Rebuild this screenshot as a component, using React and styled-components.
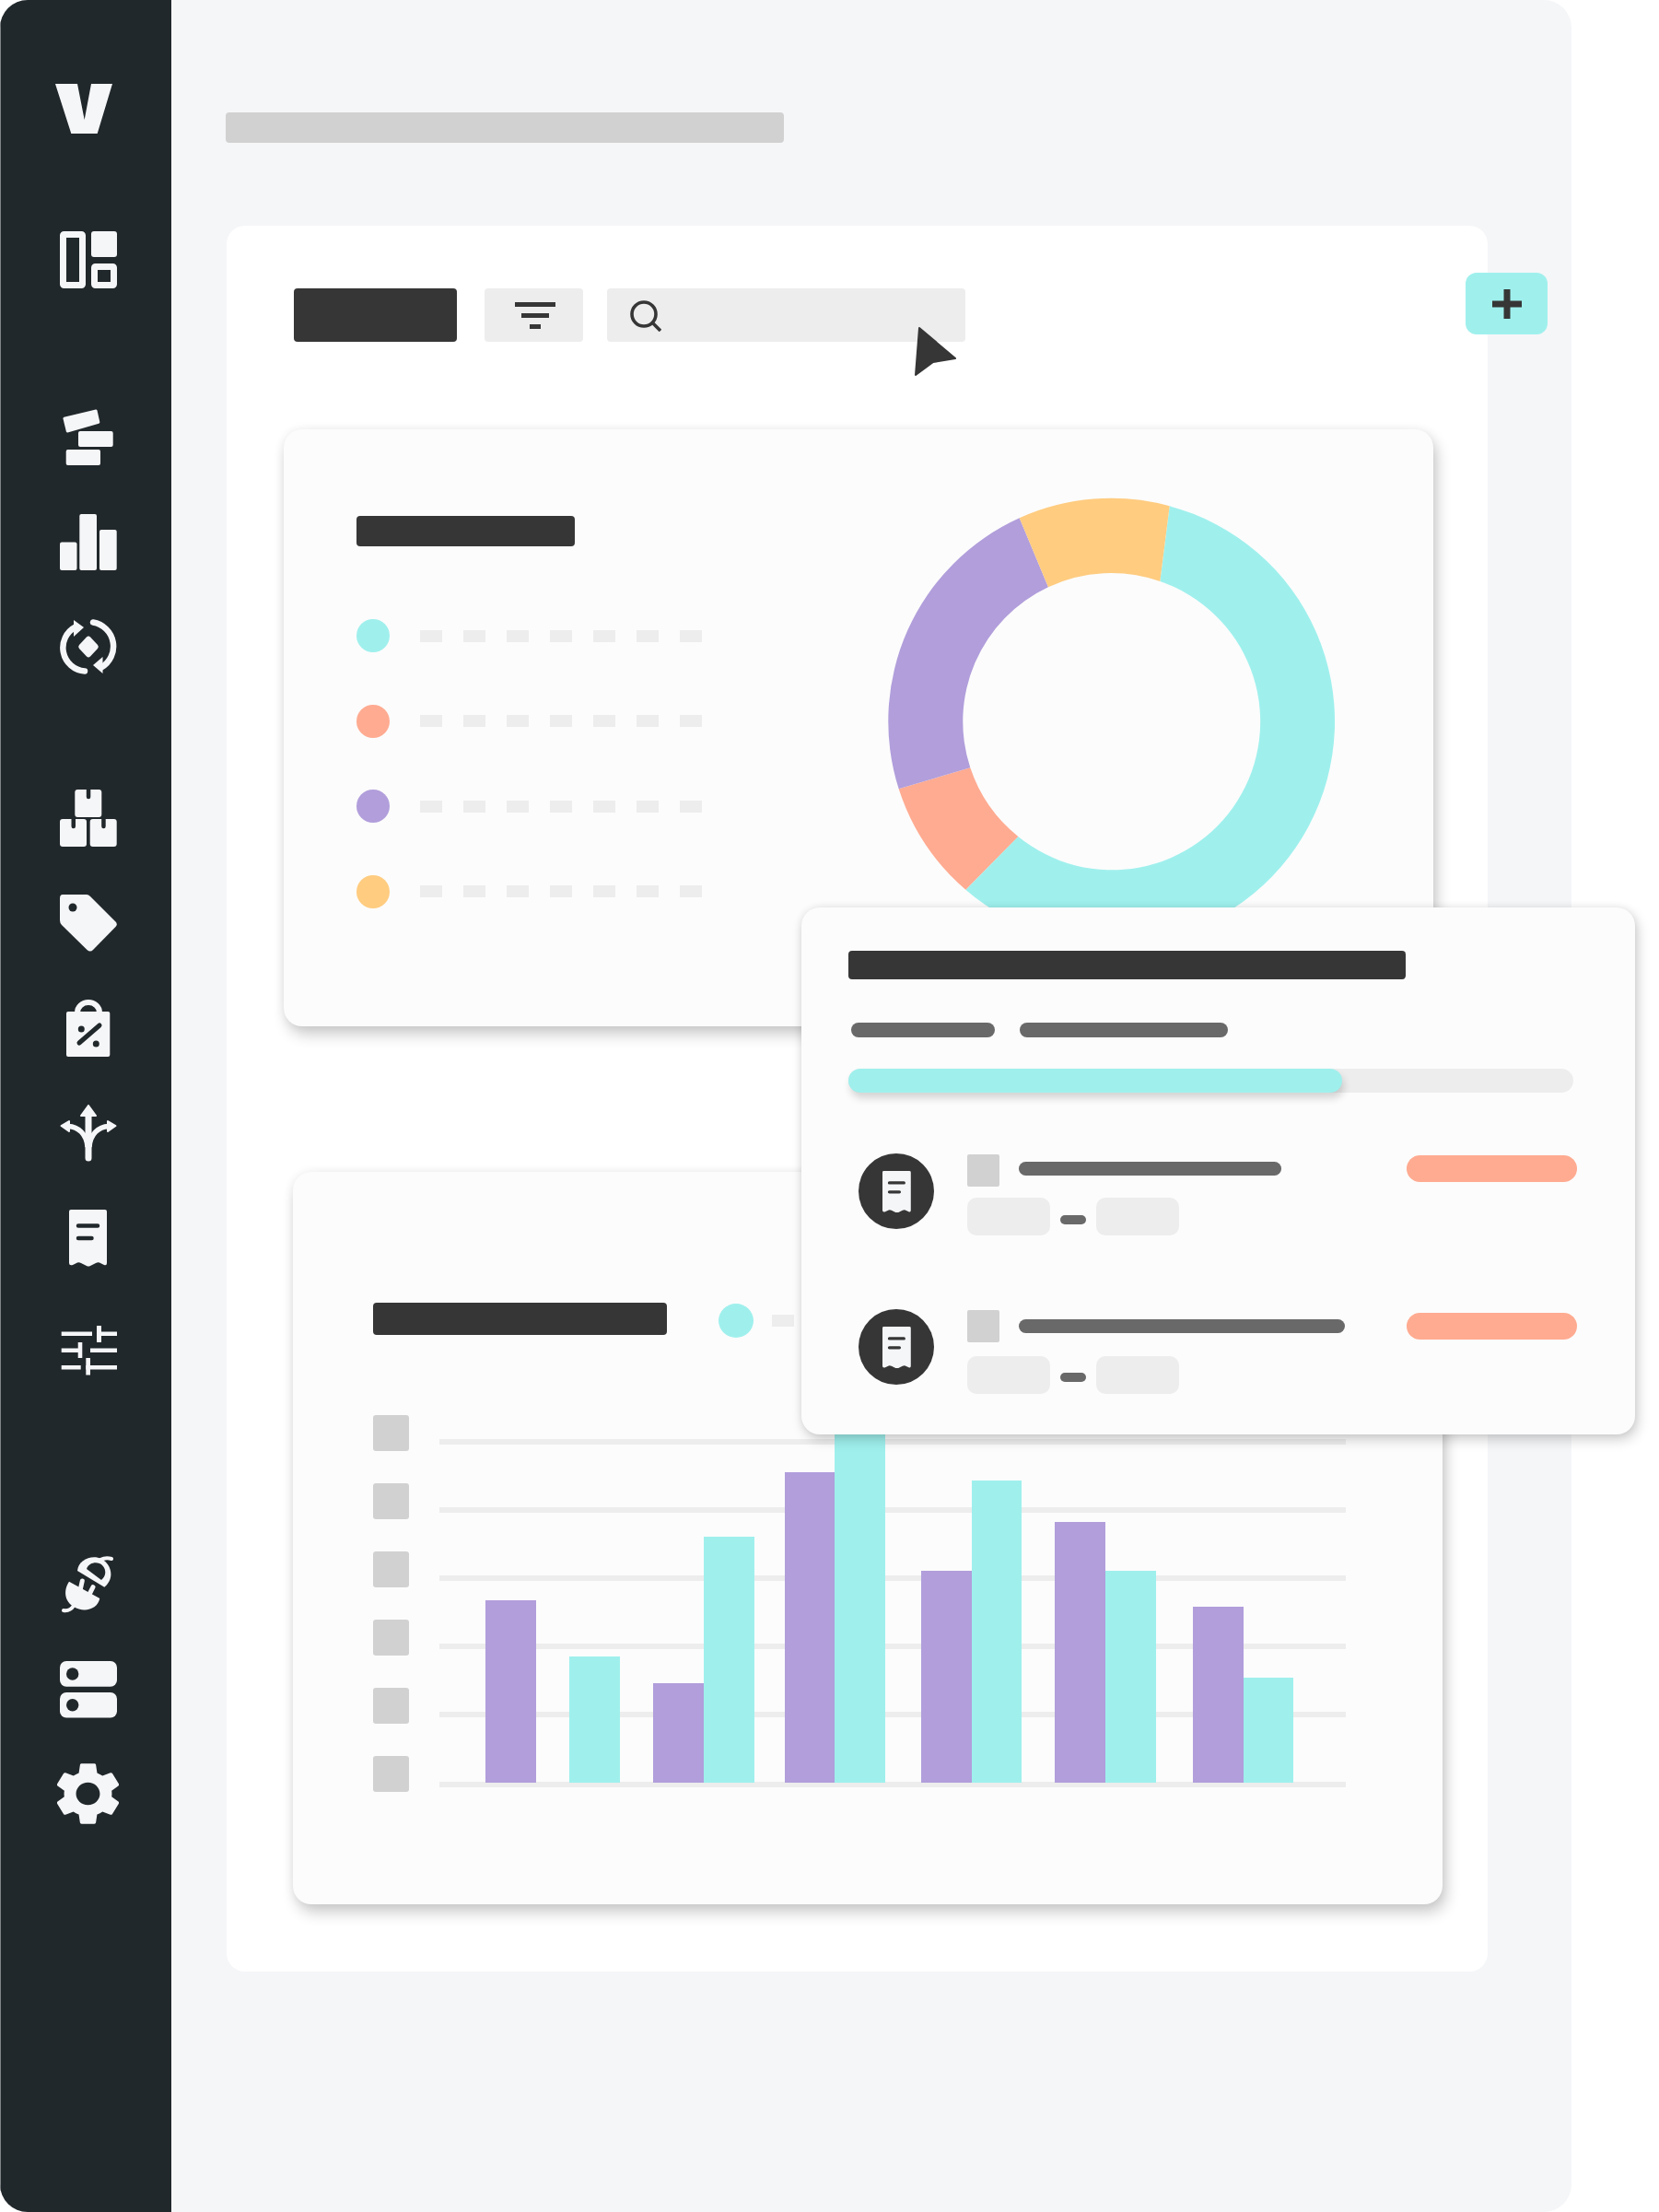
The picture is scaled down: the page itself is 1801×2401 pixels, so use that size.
import styled, { createGlobalStyle } from "styled-components";

const INK = "#21282b";
const DARK = "#363636";
const TEAL = "#9ff0ed";
const PINK = "#ffab91";
const PURPLE = "#b19edb";
const YELLOW = "#ffcc80";
const SOFT = "#ededed";
const MID = "#d1d1d1";
const GREY = "#696969";
const PALE = "#f5f6f8";
const CARD = "#fcfcfc";

const GlobalStyle = createGlobalStyle`
    html, body {
        margin: 0;
        padding: 0;
        background: #ffffff;
        font-family: "Liberation Sans", Arial, sans-serif;
    }
`;

const Page = styled.div`
    position: relative;
    width: 1801px;
    height: 2401px;
    overflow: hidden;
    background: #ffffff;
`;

const Frame = styled.div`
    display: flex;
    width: 1706px;
    height: 2401px;
    border-radius: 30px;
    overflow: hidden;
    background: ${PALE};
`;

const Sidebar = styled.nav`
    display: flex;
    flex-direction: column;
    align-items: center;
    flex: none;
    box-sizing: border-box;
    width: 186px;
    padding: 91px 0 0 6px;
    background: ${INK};
    box-shadow: inset 1px 0 0 #7f8486;
`;

const Logo = styled.svg`
    display: block;
    flex: none;
    width: 62px;
    height: 54px;
    margin-right: 10px;
    fill: ${PALE};
`;

const NavGroup = styled.div`
    display: flex;
    flex-direction: column;
    gap: 52px;
    width: 62px;
    margin-top: ${(p) => p.$top}px;
`;

const NavIcon = styled.svg`
    display: block;
    flex: none;
    width: 62px;
    height: 62px;
    fill: ${PALE};
    margin-top: ${(p) => p.$nudge || 0}px;
`;

const GearIcon = styled(NavIcon)`
    width: 67px;
    height: 68px;
    margin-left: -3px;
`;

const Main = styled.main`
    flex: 1;
    padding-top: 122px;
`;

const PageTitle = styled.div`
    width: 606px;
    height: 33px;
    margin-left: 59px;
    border-radius: 4px;
    background: ${MID};
`;

const Panel = styled.section`
    box-sizing: border-box;
    width: 1369px;
    height: 1895px;
    margin: 90px 0 0 60px;
    padding-top: 68px;
    border-radius: 20px;
    background: #ffffff;
`;

const Toolbar = styled.div`
    display: flex;
    margin-left: 73px;
    height: 58px;
`;

const PrimaryButton = styled.div`
    width: 177px;
    border-radius: 4px;
    background: ${DARK};
`;

const FilterButton = styled.div`
    display: flex;
    flex-direction: column;
    align-items: center;
    justify-content: center;
    gap: 7px;
    box-sizing: border-box;
    width: 107px;
    margin-left: 30px;
    padding-left: 3px;
    border-radius: 4px;
    background: ${SOFT};
`;

const FilterLine = styled.span`
    display: block;
    width: ${(p) => p.$w}px;
    height: 5px;
    background: ${DARK};
`;

const SearchBox = styled.div`
    display: flex;
    align-items: center;
    box-sizing: border-box;
    width: 389px;
    margin-left: 26px;
    padding-left: 25px;
    border-radius: 4px;
    background: ${SOFT};
`;

const SearchIcon = styled.svg`
    display: block;
    width: 34px;
    height: 34px;
    margin-top: 1px;
    fill: none;
    stroke: ${DARK};
    stroke-width: 3.6;
`;

const Card = styled.article`
    box-sizing: border-box;
    width: 1248px;
    margin: ${(p) => p.$top}px 0 0 ${(p) => p.$left}px;
    border-radius: 20px;
    background: ${CARD};
    box-shadow: 0 0 12px rgba(0, 0, 0, 0.06), 4px 9px 16px rgba(0, 0, 0, 0.2);
`;

const DonutCard = styled(Card)`
    display: flex;
    justify-content: space-between;
    align-items: flex-start;
    height: 648px;
    padding: 75px 108px 0 79px;
`;

const LegendColumn = styled.div`
    padding-top: 19px;
`;

const BlockTitle = styled.div`
    width: ${(p) => p.$w}px;
    height: ${(p) => p.$h}px;
    border-radius: 4px;
    background: ${DARK};
`;

const Legend = styled.div`
    display: flex;
    flex-direction: column;
    gap: 56.5px;
    margin-top: 79px;
`;

const LegendRow = styled.div`
    display: flex;
    align-items: center;
    gap: 33px;
`;

const Dot = styled.span`
    display: block;
    flex: none;
    width: 36px;
    height: 36px;
    border-radius: 50%;
    background: ${(p) => p.$color};
`;

const Dashes = styled.div`
    display: flex;
    gap: 23.5px;
`;

const Dash = styled.span`
    display: block;
    width: 23.5px;
    height: 13px;
    background: ${SOFT};
`;

const Donut = styled.svg`
    display: block;
    flex: none;
    width: 484px;
    height: 484px;
    overflow: visible;
`;

const ChartCard = styled(Card)`
    height: 795.5px;
    padding: 142.5px 0 0 87px;
`;

const ChartHeader = styled.div`
    display: flex;
    align-items: flex-start;
`;

const HeaderDot = styled(Dot)`
    width: 38px;
    height: 37px;
    margin: 1px 0 0 56px;
`;

const HeaderDash = styled(Dash)`
    margin: 13px 0 0 20px;
`;

const ChartBody = styled.div`
    display: flex;
    gap: 33px;
    margin-top: 84px;
`;

const YAxis = styled.div`
    display: flex;
    flex-direction: column;
    gap: 35px;
`;

const YTick = styled.span`
    display: block;
    width: 39px;
    height: 39px;
    border-radius: 3px;
    background: ${MID};
`;

const BarChart = styled.svg`
    display: block;
    flex: none;
    width: 984px;
    height: 410px;
`;

const AddButton = styled.div`
    position: absolute;
    left: 1591px;
    top: 296px;
    display: flex;
    align-items: center;
    justify-content: center;
    width: 89px;
    height: 67px;
    border-radius: 12px;
    background: ${TEAL};
`;

const PlusIcon = styled.svg`
    display: block;
    width: 32px;
    height: 32px;
    fill: ${DARK};
`;

const Cursor = styled.svg`
    position: absolute;
    left: 990px;
    top: 352px;
    width: 52px;
    height: 60px;
    fill: ${DARK};
    stroke: ${DARK};
    stroke-width: 2;
    stroke-linejoin: round;
`;

const Popup = styled.aside`
    position: absolute;
    left: 870px;
    top: 984.5px;
    box-sizing: border-box;
    width: 905px;
    height: 572.5px;
    padding: 47.5px 0 0 51px;
    border-radius: 20px;
    background: ${CARD};
    box-shadow: 0 0 8px rgba(0, 0, 0, 0.08), 3px 6px 14px rgba(0, 0, 0, 0.18);
`;

const PillRow = styled.div`
    display: flex;
    gap: 27px;
    margin: 47px 0 0 3px;
`;

const Pill = styled.span`
    display: block;
    width: ${(p) => p.$w}px;
    height: 16px;
    border-radius: 8px;
    background: ${GREY};
`;

const Progress = styled.div`
    width: 787px;
    height: 26px;
    margin-top: 34px;
    border-radius: 13px;
    background: ${SOFT};
`;

const ProgressFill = styled.div`
    height: 100%;
    border-radius: 13px;
    background: ${TEAL};
    box-shadow: 2px 6px 8px rgba(0, 0, 0, 0.16);
`;

const Entry = styled.div`
    display: flex;
    gap: 36px;
    margin: ${(p) => p.$top}px 0 0 11px;
`;

const EntryBadge = styled.div`
    display: flex;
    align-items: center;
    justify-content: center;
    flex: none;
    width: 82px;
    height: 82px;
    border-radius: 50%;
    background: ${DARK};
`;

const BadgeReceipt = styled.svg`
    display: block;
    width: 31px;
    height: 45px;
    fill: ${PALE};
`;

const EntryBody = styled.div`
    width: 662px;
    padding-top: 1px;
`;

const EntryTop = styled.div`
    display: flex;
    align-items: center;
    height: 35px;
`;

const EntrySquare = styled.span`
    display: block;
    flex: none;
    width: 35px;
    height: 35px;
    background: ${MID};
    border-radius: 2px;
`;

const EntryLine = styled.span`
    display: block;
    width: ${(p) => p.$w}px;
    height: 15px;
    margin: 0 0 ${(p) => p.$lift}px 21px;
    border-radius: 8px;
    background: ${GREY};
`;

const EntryAmount = styled.span`
    display: block;
    width: 185px;
    height: 29px;
    margin: 0 0 ${(p) => p.$lift}px auto;
    border-radius: 15px;
    background: ${PINK};
`;

const EntryDates = styled.div`
    display: flex;
    align-items: center;
    gap: 11px;
    margin-top: ${(p) => p.$gap}px;
`;

const DateChip = styled.span`
    display: block;
    width: 90px;
    height: 41px;
    border-radius: 10px;
    background: ${SOFT};
`;

const DateDash = styled.span`
    display: block;
    width: 28px;
    height: 10px;
    margin-top: ${(p) => p.$drop}px;
    border-radius: 5px;
    background: ${GREY};
`;

const LEGEND = [TEAL, PINK, PURPLE, YELLOW];
const GRID_Y = [1562, 1636, 1710, 1784, 1858, 1934];

const BARS = [
    { x: 527, w: 55, top: 1737, color: PURPLE },
    { x: 618, w: 55, top: 1798, color: TEAL },
    { x: 709, w: 55, top: 1827, color: PURPLE },
    { x: 764, w: 55, top: 1668, color: TEAL },
    { x: 852, w: 54, top: 1598, color: PURPLE },
    { x: 906, w: 55, top: 1540, color: TEAL },
    { x: 1000, w: 55, top: 1705, color: PURPLE },
    { x: 1055, w: 54, top: 1607, color: TEAL },
    { x: 1145, w: 55, top: 1652, color: PURPLE },
    { x: 1200, w: 55, top: 1705, color: TEAL },
    { x: 1295, w: 55, top: 1744, color: PURPLE },
    { x: 1350, w: 54, top: 1821, color: TEAL },
];

const RECEIPT =
    "M12 0H49Q51 0 51 2V58Q51 61 48 60L43 57.5Q41 57 39 58L33 61Q31 62 29 61L23 58Q21 57 19 57.5L14 60Q10 61 10 58V2Q10 0 12 0Z";

function Box({ x, y }) {
    return (
        <g>
            <rect x={x} y={y} width="29" height="30" rx="3" />
            <path d={`M${x + 12.5} ${y}h4.5v8a2.2 2.2 0 0 1-4.5 0z`} fill={INK} />
        </g>
    );
}

function SideNav() {
    return (
        <Sidebar>
            <Logo viewBox="0 0 62 54">
                <polygon points="0,0 24,0 31.7,39 39,0 62,0 45.7,54 17.3,54" />
            </Logo>

            <NavGroup $top={106}>
                <NavIcon viewBox="0 0 62 62">
                    <rect x="3.5" y="3.5" width="21" height="55" rx="1" fill="none" stroke={PALE} strokeWidth="7" />
                    <rect x="34" y="0" width="28" height="28" rx="3" />
                    <rect x="37.5" y="38.5" width="21" height="20" rx="1" fill="none" stroke={PALE} strokeWidth="7" />
                </NavIcon>
            </NavGroup>

            <NavGroup $top={131}>
                <NavIcon viewBox="0 0 62 62">
                    <path d="M4.5 8.8L39 .4a1.5 1.5 0 0 1 1.5 1L43.3 14a1.5 1.5 0 0 1-1 1.7L8.5 25.4a1.5 1.5 0 0 1-1.6-1L3.5 10.5a1.5 1.5 0 0 1 1-1.7Z" />
                    <rect x="20" y="24" width="37.7" height="17" rx="2" />
                    <rect x="6.7" y="44" width="37.3" height="17" rx="2" />
                </NavIcon>
                <NavIcon viewBox="0 0 62 62">
                    <rect x="0" y="30.5" width="18.5" height="30.5" rx="2" />
                    <rect x="21.3" y="0" width="18.7" height="61" rx="2" />
                    <rect x="43" y="17" width="18.7" height="44" rx="2" />
                </NavIcon>
                <NavIcon viewBox="0 0 62 62">
                    <path d="M17 8.5A25.5 25.5 0 0 0 27 56.5" fill="none" stroke={PALE} strokeWidth="6.5" strokeLinecap="round" />
                    <path d="M36 3.5A26.5 26.5 0 0 1 45 52.5" fill="none" stroke={PALE} strokeWidth="6.5" strokeLinecap="round" />
                    <polygon points="15,1 26,9 15,19" />
                    <polygon points="36,50 46.5,41 46.5,59" />
                    <path d="M29 19.5a3 3 0 0 1 4 0L41 28a3 3 0 0 1 0 4L33 40.5a3 3 0 0 1-4 0L21 32a3 3 0 0 1 0-4Z" />
                </NavIcon>
            </NavGroup>

            <NavGroup $top={123}>
                <NavIcon viewBox="0 0 62 62">
                    <Box x={16.3} y={0} />
                    <Box x={0} y={32} />
                    <Box x={32.7} y={32} />
                </NavIcon>
                <NavIcon viewBox="0 0 62 62">
                    <path d="M3 0H29Q31 0 33 2L60.5 29.5Q63 32 60.5 35L36 60Q33 63 29.5 60L2 33Q0 31 0 28V4Q0 0 3 0Z" />
                    <circle cx="14" cy="14" r="4.5" fill={INK} />
                </NavIcon>
                <NavIcon viewBox="0 0 62 62">
                    <path d="M19 14A12 11 0 0 1 43 14" fill="none" stroke={PALE} strokeWidth="6" />
                    <rect x="7" y="13" width="47.3" height="49" rx="2" />
                    <path d="M21 47L43 28" stroke={INK} strokeWidth="5" strokeLinecap="round" />
                    <circle cx="23.3" cy="32" r="3.5" fill={INK} />
                    <circle cx="39.3" cy="48" r="3.5" fill={INK} />
                </NavIcon>
                <NavIcon viewBox="0 0 62 62">
                    <path d="M31 10V58" stroke={PALE} strokeWidth="7" strokeLinecap="round" />
                    <path d="M31 1L39 12H23Z" stroke={PALE} strokeWidth="2" strokeLinejoin="round" />
                    <path d="M9 23.5C20 24 29 32 30 46" fill="none" stroke={PALE} strokeWidth="5.5" />
                    <path d="M53 23.5C42 24 33 32 32 46" fill="none" stroke={PALE} strokeWidth="5.5" />
                    <path d="M1.5 23L10 18V29Z" stroke={PALE} strokeWidth="2" strokeLinejoin="round" />
                    <path d="M60.5 23L52 18V29Z" stroke={PALE} strokeWidth="2" strokeLinejoin="round" />
                </NavIcon>
                <NavIcon viewBox="0 0 62 62">
                    <path d={RECEIPT} />
                    <path d="M20 17.5H41M20 31H34.5" stroke={INK} strokeWidth="4.5" strokeLinecap="round" />
                </NavIcon>
                <NavIcon viewBox="0 0 62 62" $nudge={7.5}>
                    <rect x="1.7" y="10.5" width="33.3" height="4.5" />
                    <rect x="40" y="4" width="5" height="18" />
                    <rect x="40" y="10.5" width="22" height="4.5" />
                    <rect x="1.7" y="28.5" width="22" height="4.5" />
                    <rect x="19.7" y="22" width="4.6" height="17" />
                    <rect x="33" y="28.5" width="29" height="4.5" />
                    <rect x="1.7" y="47" width="21" height="4.5" />
                    <rect x="28.3" y="39" width="4.7" height="18.5" />
                    <rect x="28.3" y="47" width="33.7" height="4.5" />
                </NavIcon>
            </NavGroup>

            <NavGroup $top={192.5}>
                <NavIcon viewBox="0 0 62 62">
                    <path d="M10 27.7L43.3 46C41 58 26 62 15 55C6 50 3 38 10 27.7Z" />
                    <path d="M24.3 27L22.3 36M36 33.7L32.3 41" stroke={PALE} strokeWidth="5" strokeLinecap="round" />
                    <path d="M15 54Q11 60 4 59" fill="none" stroke={PALE} strokeWidth="4" strokeLinecap="round" />
                    <path d="M19 16C20 4 35 -2 45 3C56 9 60 24 48.3 33.7Z" />
                    <path d="M29 14C32 6 42 6 46 10C51 15 50 22 45 26Z" fill={INK} />
                    <path d="M44 4Q50 1 56 3" fill="none" stroke={PALE} strokeWidth="4" strokeLinecap="round" />
                </NavIcon>
                <NavIcon viewBox="0 0 62 62">
                    <rect x="0" y="0" width="62" height="27.7" rx="7" />
                    <rect x="0" y="34" width="62" height="27.5" rx="7" />
                    <circle cx="13.7" cy="14" r="6.7" fill={INK} />
                    <circle cx="13.7" cy="47.7" r="6.7" fill={INK} />
                </NavIcon>
                <GearIcon viewBox="2.7 2 18.6 20" preserveAspectRatio="none" $nudge={-4}>
                    <path d="M19.14 12.94c.04-.3.06-.61.06-.94 0-.32-.02-.64-.07-.94l2.03-1.58c.18-.14.23-.41.12-.61l-1.92-3.32c-.12-.22-.37-.29-.59-.22l-2.39.96c-.5-.38-1.03-.7-1.62-.94l-.36-2.54c-.04-.24-.24-.41-.48-.41h-3.84c-.24 0-.43.17-.47.41l-.36 2.54c-.59.24-1.13.57-1.62.94l-2.39-.96c-.22-.08-.47 0-.59.22L2.74 8.87c-.12.21-.08.47.12.61l2.03 1.58c-.05.3-.09.63-.09.94s.02.64.07.94l-2.03 1.58c-.18.14-.23.41-.12.61l1.92 3.32c.12.22.37.29.59.22l2.39-.96c.5.38 1.03.7 1.62.94l.36 2.54c.05.24.24.41.48.41h3.84c.24 0 .44-.17.47-.41l.36-2.54c.59-.24 1.13-.56 1.62-.94l2.39.96c.22.08.47 0 .59-.22l1.92-3.32c.12-.22.07-.47-.12-.61l-2.01-1.58zM12 15.6c-1.98 0-3.6-1.62-3.6-3.6s1.62-3.6 3.6-3.6 3.6 1.62 3.6 3.6-1.62 3.6-3.6 3.6z" />
                </GearIcon>
            </NavGroup>
        </Sidebar>
    );
}

function EntryRow({ top, line, gap, lift, drop }) {
    return (
        <Entry $top={top}>
            <EntryBadge>
                <BadgeReceipt viewBox="10 0 41.3 61" preserveAspectRatio="none">
                    <path d={RECEIPT} />
                    <path d="M20 17.5H41M20 31H34.5" stroke={DARK} strokeWidth="4.5" strokeLinecap="round" />
                </BadgeReceipt>
            </EntryBadge>
            <EntryBody>
                <EntryTop>
                    <EntrySquare />
                    <EntryLine $w={line} $lift={lift} />
                    <EntryAmount $lift={lift} />
                </EntryTop>
                <EntryDates $gap={gap}>
                    <DateChip />
                    <DateDash $drop={drop} />
                    <DateChip />
                </EntryDates>
            </EntryBody>
        </Entry>
    );
}

function App() {
    return (
        <Page>
            <GlobalStyle />
            <Frame>
                <SideNav />
                <Main>
                    <PageTitle />
                    <Panel>
                        <Toolbar>
                            <PrimaryButton />
                            <FilterButton>
                                <FilterLine $w={44} />
                                <FilterLine $w={30} />
                                <FilterLine $w={12} />
                            </FilterButton>
                            <SearchBox>
                                <SearchIcon viewBox="0 0 34 34">
                                    <circle cx="15" cy="15" r="13" />
                                    <path d="M25 25L33 33" />
                                </SearchIcon>
                            </SearchBox>
                        </Toolbar>

                        <DonutCard $top={95} $left={62}>
                            <LegendColumn>
                                <BlockTitle $w={237} $h={33} />
                                <Legend>
                                    {LEGEND.map((color) => (
                                        <LegendRow key={color}>
                                            <Dot $color={color} />
                                            <Dashes>
                                                {[0, 1, 2, 3, 4, 5, 6].map((i) => (
                                                    <Dash key={i} />
                                                ))}
                                            </Dashes>
                                        </LegendRow>
                                    ))}
                                </Legend>
                            </LegendColumn>
                            <Donut viewBox="964 541 484 484">
                                <path fill={TEAL} d="M1269.7 549.3A242 242 0 1 1 1048.3 965.7L1105.3 908A161 161 0 1 0 1259.3 631Z" />
                                <path fill={PINK} d="M1048.3 965.7A242 242 0 0 1 975.7 856.3L1053.3 833.3A161 161 0 0 0 1105.3 908Z" />
                                <path fill={PURPLE} d="M975.7 856.3A242 242 0 0 1 1106.7 562.3L1138 637.3A161 161 0 0 0 1053.3 833.3Z" />
                                <path fill={YELLOW} d="M1106.7 562.3A242 242 0 0 1 1269.7 549.3L1259.3 631A161 161 0 0 0 1138 637.3Z" />
                            </Donut>
                        </DonutCard>

                        <ChartCard $top={157.5} $left={72}>
                            <ChartHeader>
                                <BlockTitle $w={319} $h={35} />
                                <HeaderDot $color={TEAL} />
                                <HeaderDash />
                            </ChartHeader>
                            <ChartBody>
                                <YAxis>
                                    {[0, 1, 2, 3, 4, 5].map((i) => (
                                        <YTick key={i} />
                                    ))}
                                </YAxis>
                                <BarChart viewBox="477 1536 984 410">
                                    {GRID_Y.map((y) => (
                                        <rect key={y} x="477" y={y} width="984" height="6" fill={SOFT} />
                                    ))}
                                    {BARS.map((b) => (
                                        <rect key={b.x} x={b.x} y={b.top} width={b.w} height={1935 - b.top} fill={b.color} />
                                    ))}
                                </BarChart>
                            </ChartBody>
                        </ChartCard>
                    </Panel>
                </Main>
            </Frame>

            <AddButton>
                <PlusIcon viewBox="0 0 32 32">
                    <path d="M12.5 0H19.5V12.5H32V19.5H19.5V32H12.5V19.5H0V12.5H12.5Z" />
                </PlusIcon>
            </AddButton>

            <Cursor viewBox="990 352 52 60">
                <polygon points="998,356 1037,389 1013,393 994,407" />
            </Cursor>

            <Popup>
                <BlockTitle $w={605} $h={31} />
                <PillRow>
                    <Pill $w={156} />
                    <Pill $w={226} />
                </PillRow>
                <Progress>
                    <ProgressFill style={{ width: `${(536 / 787) * 100}%` }} />
                </Progress>
                <EntryRow top={66} line={285} gap={11.5} lift={4} drop={8} />
                <EntryRow top={80.5} line={354} gap={14.5} lift={0} drop={5} />
            </Popup>
        </Page>
    );
}

export default App;
